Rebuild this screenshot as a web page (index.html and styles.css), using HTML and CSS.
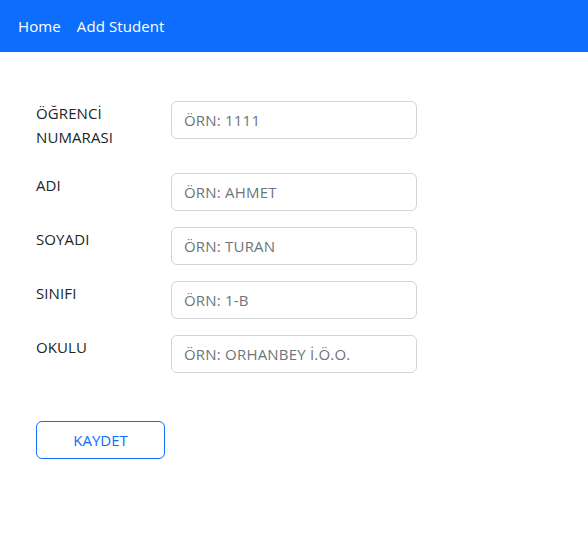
FILE: index.html
```html
<!DOCTYPE html>
<html lang="tr">
<head>
<meta charset="utf-8">
<link rel="stylesheet" href="styles.css">
</head>
<body>
<nav class="navbar">
  <a class="nav-link" href="#">Home</a>
  <a class="nav-link" href="#">Add Student</a>
</nav>
<main class="container">
  <form class="form">
    <div class="row">
      <label class="label">ÖĞRENCİ NUMARASI</label>
      <input class="input" type="text" placeholder="ÖRN: 1111">
    </div>
    <div class="row">
      <label class="label">ADI</label>
      <input class="input" type="text" placeholder="ÖRN: AHMET">
    </div>
    <div class="row">
      <label class="label">SOYADI</label>
      <input class="input" type="text" placeholder="ÖRN: TURAN">
    </div>
    <div class="row">
      <label class="label">SINIFI</label>
      <input class="input" type="text" placeholder="ÖRN: 1-B">
    </div>
    <div class="row">
      <label class="label">OKULU</label>
      <input class="input" type="text" placeholder="ÖRN: ORHANBEY İ.Ö.O.">
    </div>
    <button class="btn" type="button">KAYDET</button>
  </form>
</main>
</body>
</html>
```
FILE: styles.css
```css
* { box-sizing: border-box; }
body {
  margin: 0;
  font-family: "Open Sans", "Noto Sans", sans-serif;
  font-size: 15px;
  line-height: 24px;
  color: #212529;
  background: #fff;
}
.navbar {
  height: 52px;
  background: #0d6efd;
  display: flex;
  align-items: center;
  gap: 16px;
  padding: 0 18px 1px;
}
.nav-link {
  color: #fff;
  text-decoration: none;
  font-size: 15px;
  letter-spacing: 0.1px;
}
.container {
  padding: 49px 36px 0;
}
.form {
  display: flex;
  flex-direction: column;
}
.row {
  display: grid;
  grid-template-columns: 135px 246px;
  align-items: start;
  margin-bottom: 16px;
}
.label {
  margin-bottom: 8px;
  width: 110px;
  letter-spacing: 0.1px;
}
.input {
  height: 38px;
  width: 246px;
  border: 1px solid #ced4da;
  border-radius: 6px;
  padding: 0 12px;
  font-family: inherit;
  font-size: 15px;
  letter-spacing: 0.2px;
  color: #212529;
}
.input::placeholder { color: #6c757d; }
.btn {
  margin-top: 32px;
  width: 129px;
  height: 38px;
  border: 1px solid #0d6efd;
  border-radius: 6px;
  background: #fff;
  color: #0d6efd;
  font-family: inherit;
  font-size: 15px;
}
```
